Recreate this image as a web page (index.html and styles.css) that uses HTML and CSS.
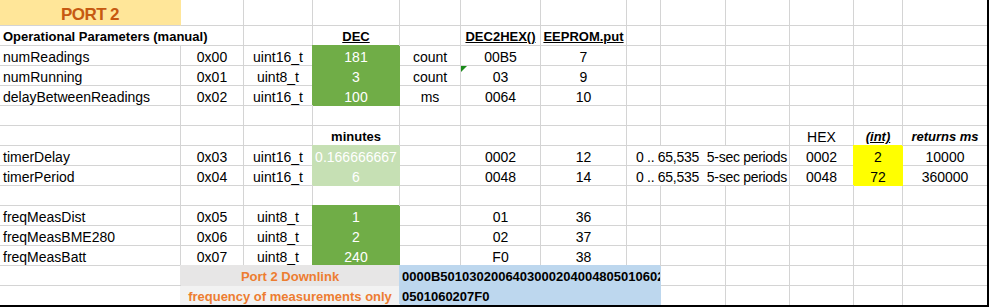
FILE: index.html
```html
<!DOCTYPE html>
<html>
<head>
<meta charset="utf-8">
<link rel="stylesheet" href="styles.css">
</head>
<body>
<div class="sheet">
  <!-- row 1 -->
  <div class="c port">PORT 2</div>
  <div class="c"></div><div class="c"></div><div class="c"></div><div class="c"></div><div class="c"></div><div class="c"></div><div class="c"></div><div class="c"></div><div class="c"></div><div class="c"></div><div class="c"></div><div class="c last"></div>
  <!-- row 2 -->
  <div class="c l b span2">Operational Parameters (manual)</div>
  <div class="c"></div>
  <div class="c b u">DEC</div>
  <div class="c"></div>
  <div class="c b u">DEC2HEX()</div>
  <div class="c b u">EEPROM.put</div>
  <div class="c"></div><div class="c"></div><div class="c"></div><div class="c"></div><div class="c"></div><div class="c last"></div>
  <!-- row 3 -->
  <div class="c l">numReadings</div>
  <div class="c">0x00</div>
  <div class="c">uint16_t</div>
  <div class="c green">181</div>
  <div class="c">count</div>
  <div class="c">00B5</div>
  <div class="c">7</div>
  <div class="c"></div><div class="c"></div><div class="c"></div><div class="c"></div><div class="c"></div><div class="c last"></div>
  <!-- row 4 -->
  <div class="c l">numRunning</div>
  <div class="c">0x01</div>
  <div class="c">uint8_t</div>
  <div class="c green">3</div>
  <div class="c">count</div>
  <div class="c flagged">03</div>
  <div class="c">9</div>
  <div class="c"></div><div class="c"></div><div class="c"></div><div class="c"></div><div class="c"></div><div class="c last"></div>
  <!-- row 5 -->
  <div class="c l">delayBetweenReadings</div>
  <div class="c">0x02</div>
  <div class="c">uint16_t</div>
  <div class="c green">100</div>
  <div class="c">ms</div>
  <div class="c">0064</div>
  <div class="c">10</div>
  <div class="c"></div><div class="c"></div><div class="c"></div><div class="c"></div><div class="c"></div><div class="c last"></div>
  <!-- row 6 -->
  <div class="c"></div><div class="c"></div><div class="c"></div><div class="c"></div><div class="c"></div><div class="c"></div><div class="c"></div><div class="c"></div><div class="c"></div><div class="c"></div><div class="c"></div><div class="c"></div><div class="c last"></div>
  <!-- row 7 -->
  <div class="c"></div><div class="c"></div><div class="c"></div>
  <div class="c b">minutes</div>
  <div class="c"></div><div class="c"></div><div class="c"></div><div class="c"></div><div class="c"></div><div class="c"></div>
  <div class="c">HEX</div>
  <div class="c b i u">(int)</div>
  <div class="c last b i">returns ms</div>
  <!-- row 8 -->
  <div class="c l">timerDelay</div>
  <div class="c">0x03</div>
  <div class="c">uint16_t</div>
  <div class="c lgreen">0.166666667</div>
  <div class="c"></div>
  <div class="c">0002</div>
  <div class="c">12</div>
  <div class="c span3 range"><span>0 .. 65,535</span><span>5-sec periods</span></div>
  <div class="c">0002</div>
  <div class="c yellow">2</div>
  <div class="c last">10000</div>
  <!-- row 9 -->
  <div class="c l">timerPeriod</div>
  <div class="c">0x04</div>
  <div class="c">uint16_t</div>
  <div class="c lgreen">6</div>
  <div class="c"></div>
  <div class="c">0048</div>
  <div class="c">14</div>
  <div class="c span3 range"><span>0 .. 65,535</span><span>5-sec periods</span></div>
  <div class="c">0048</div>
  <div class="c yellow">72</div>
  <div class="c last">360000</div>
  <!-- row 10 -->
  <div class="c"></div><div class="c"></div><div class="c"></div><div class="c"></div><div class="c"></div><div class="c"></div><div class="c"></div><div class="c"></div><div class="c"></div><div class="c"></div><div class="c"></div><div class="c"></div><div class="c last"></div>
  <!-- row 11 -->
  <div class="c l">freqMeasDist</div>
  <div class="c">0x05</div>
  <div class="c">uint8_t</div>
  <div class="c green">1</div>
  <div class="c"></div>
  <div class="c">01</div>
  <div class="c">36</div>
  <div class="c"></div><div class="c"></div><div class="c"></div><div class="c"></div><div class="c"></div><div class="c last"></div>
  <!-- row 12 -->
  <div class="c l">freqMeasBME280</div>
  <div class="c">0x06</div>
  <div class="c">uint8_t</div>
  <div class="c green">2</div>
  <div class="c"></div>
  <div class="c">02</div>
  <div class="c">37</div>
  <div class="c"></div><div class="c"></div><div class="c"></div><div class="c"></div><div class="c"></div><div class="c last"></div>
  <!-- row 13 -->
  <div class="c l">freqMeasBatt</div>
  <div class="c">0x07</div>
  <div class="c">uint8_t</div>
  <div class="c green">240</div>
  <div class="c"></div>
  <div class="c">F0</div>
  <div class="c">38</div>
  <div class="c"></div><div class="c"></div><div class="c"></div><div class="c"></div><div class="c"></div><div class="c last"></div>
  <!-- row 14 -->
  <div class="c"></div>
  <div class="c span3 gray1 orange">Port 2 Downlink</div>
  <div class="c span4 blue code">0000B501030200640300020400480501060207F0</div>
  <div class="c"></div><div class="c"></div><div class="c"></div><div class="c"></div><div class="c last"></div>
  <!-- row 15 -->
  <div class="c bottom"></div>
  <div class="c span3 gray2 orange bottom">frequency of measurements only</div>
  <div class="c span4 blue code bottom">0501060207F0</div>
  <div class="c bottom"></div><div class="c bottom"></div><div class="c bottom"></div><div class="c bottom"></div><div class="c last bottom"></div>
</div>
</body>
</html>
```

FILE: styles.css
```css
html, body {
  margin: 0;
  padding: 0;
  background: #ffffff;
}

.sheet {
  display: grid;
  grid-template-columns: 181px 63px 69px 87px 61px 80px 86px 34px 65px 64px 64px 49px 84px;
  grid-template-rows: 26px repeat(13, 20px) 19px;
  width: 987px;
  border-right: 2px solid #000;
  border-bottom: 2px solid #000;
  font-family: "Liberation Sans", Arial, sans-serif;
  font-size: 14px;
  color: #000;
}

.c {
  box-sizing: border-box;
  border-right: 1px solid #d4d4d4;
  border-bottom: 1px solid #d4d4d4;
  display: flex;
  align-items: flex-start;
  justify-content: center;
  line-height: 16px;
  padding-top: 3px;
  white-space: nowrap;
  position: relative;
}

.c.last { border-right: none; }
.c.bottom { border-bottom: none; }

.l { justify-content: flex-start; padding-left: 3px; }
.b { font-weight: bold; font-size: 13px; }
.u { text-decoration: underline; }
.i { font-style: italic; }

.span2 { grid-column: span 2; }
.span3 { grid-column: span 3; }
.span4 { grid-column: span 4; }

.port {
  background: #ffe699;
  border-right-color: #ffe699;
  color: #c65911;
  font-weight: bold;
  font-size: 17px;
  letter-spacing: -0.6px;
  line-height: 17px;
  padding-top: 6px;
}

.green {
  background: #70ad47;
  border-color: #70ad47;
  box-shadow: -1px -1px 0 0 #70ad47;
  color: #ffffff;
}

.lgreen {
  background: #c6e0b4;
  border-color: #c6e0b4;
  box-shadow: -1px -1px 0 0 #c6e0b4;
  color: #ffffff;
}

.yellow {
  background: #ffff00;
  border-color: #ffff00;
  box-shadow: -1px -1px 0 0 #ffff00;
}

.range {
  justify-content: space-between;
  padding-left: 9px;
  padding-right: 2px;
  letter-spacing: -0.3px;
}

.gray1 {
  background: #e7e6e6;
  border-right-color: #e7e6e6;
  border-bottom-color: #e7e6e6;
  box-shadow: -1px -1px 0 0 #e7e6e6;
}

.gray2 {
  background: #f2f2f2;
  border-right-color: #f2f2f2;
  box-shadow: -1px 0 0 0 #f2f2f2;
}

.orange {
  color: #ed7d31;
  font-weight: bold;
  font-size: 13px;
}

.blue {
  background: #bdd7ee;
  border-color: #bdd7ee;
  box-shadow: -1px -1px 0 0 #bdd7ee;
}

.code {
  justify-content: flex-start;
  padding-left: 2px;
  font-weight: bold;
  font-size: 13px;
  overflow: hidden;
}

.flagged::before {
  content: "";
  position: absolute;
  top: 0;
  left: 0;
  width: 0;
  height: 0;
  border-top: 6px solid #1a8a1a;
  border-right: 6px solid transparent;
}
```
